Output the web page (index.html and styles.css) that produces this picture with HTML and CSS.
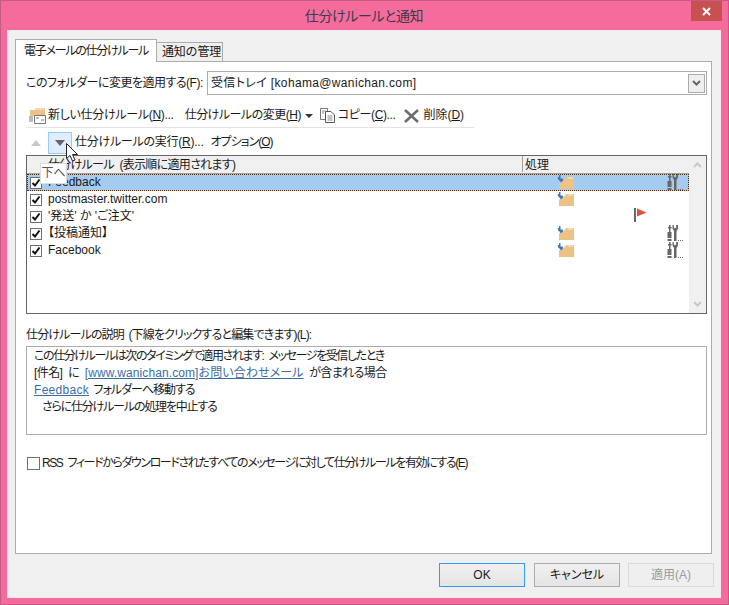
FILE: index.html
```html
<!DOCTYPE html>
<html lang="ja">
<head>
<meta charset="utf-8">
<title>仕分けルールと通知</title>
<link rel="stylesheet" href="styles.css">
</head>
<body>
<svg class="defs" width="0" height="0" aria-hidden="true">
  <symbol id="move" viewBox="0 0 18 15">
    <path d="M2 14V7.500L6 6 9 2H17V14Z" fill="#ecc384"/>
    <path d="M10.500 3H16" stroke="#fbeed8" fill="none"/>
    <path d="M2 0H3.500V3Q3.500 4 4.500 4V2.500L6.500 5 4 7.500 2.500 5.500Q1 5 0.800 3V2H2Z" fill="#3f77b5"/>
  </symbol>
  <symbol id="tools" viewBox="0 0 16 17">
    <path d="M2 0H3.500V2H4.500V3.500H3.500V7H4.500V13H0.500V7H2V3.500H1V2H2Z" fill="#666"/>
    <path d="M0.500 14H4.500V16H0.500Z" fill="#666"/>
    <path d="M5.500 0H6.800V2.500L8 3.500 9.200 2.500V0H11V3.500L9.500 6V16H7V6L5.500 3.500Z" fill="#666"/>
    <path d="M11 15.500H12M13 15.500H14M15 15.500H16" stroke="#666"/>
  </symbol>
  <symbol id="check" viewBox="0 0 12 12">
    <path d="M2.500 6L5 8.500 9.500 2.500" fill="none" stroke="#111" stroke-width="2"/>
  </symbol>
  <symbol id="chev" viewBox="0 0 9 6">
    <path d="M1 1L4.500 4.500 8 1" fill="none" stroke="currentColor" stroke-width="2"/>
  </symbol>
</svg>

<div class="window">
  <header class="titlebar">
    <span class="title">仕分けルールと通知</span>
    <button class="close" aria-label="閉じる">
      <svg width="9" height="9" viewBox="0 0 9 9"><path d="M1 1L8 8M8 1L1 8" stroke="#fff" stroke-width="2"/></svg>
    </button>
  </header>

  <main class="client">
    <nav class="tabs">
      <div class="tab active">電子メールの仕分けルール</div>
      <div class="tab">通知の管理</div>
    </nav>

    <section class="panel">
      <div class="folder-row">
        <label class="folder-label">このフォルダーに変更を適用する(F):</label>
        <div class="combo">
          <span class="combo-text">受信トレイ [kohama@wanichan.com]</span>
          <span class="combo-btn"><svg class="chev" width="9" height="6"><use href="#chev"/></svg></span>
        </div>
      </div>

      <div class="toolbar first">
        <span class="tool tool-new">
          <svg width="17" height="17" viewBox="0 0 17 17">
            <path d="M1 3H6L7 1H16V9H1Z" fill="#ecc384"/>
            <path d="M7 2H15" stroke="#fbeed8"/>
            <path d="M5.500 8.500H16.500V16.500H5.500Z" fill="#fff" stroke="#777"/>
            <path d="M7 11H10M12 13H15" stroke="#777"/>
            <path d="M0 10H4M0 12H4M0 14H4" stroke="#777"/>
          </svg>
          <span class="t-new">新しい仕分けルール(<u>N</u>)...</span>
        </span>
        <span class="tool tool-change"><span class="t-change">仕分けルールの変更(<u>H</u>)</span><i class="caret"></i></span>
        <span class="tool tool-copy">
          <svg width="15" height="15" viewBox="0 0 15 15">
            <path d="M0.500 0.500H7.500V11.500H0.500Z" fill="#fff" stroke="#777"/>
            <path d="M5.500 3.500H11L14.500 7V14.500H5.500Z" fill="#fff" stroke="#555"/>
            <path d="M2 3H6M2 5H4M7.500 8H12.500M7.500 10H12.500M7.500 12H12.500" stroke="#888"/>
          </svg>
          <span class="t-copy">コピー(<u>C</u>)...</span>
        </span>
        <span class="tool tool-del">
          <svg width="15" height="14" viewBox="0 0 15 14"><path d="M1 1L14 13M14 1L1 13" stroke="#6e6e6e" stroke-width="2.600"/></svg>
          <span>削除(<u>D</u>)</span>
        </span>
      </div>

      <div class="toolbar second">
        <span class="arrow-up"></span>
        <span class="arrow-btn"><i></i></span>
        <span class="tool tool-run">仕分けルールの実行(<u>R</u>)...</span>
        <span class="tool tool-opt">オプション(<u>O</u>)</span>
      </div>

      <div class="list">
        <div class="list-main">
          <div class="list-head">
            <span class="head-name">仕分けルール (表示順に適用されます)</span>
            <span class="head-act">処理</span>
          </div>
          <div class="row selected">
            <span class="cb"><svg width="12" height="12"><use href="#check"/></svg></span>
            <span class="name">Feedback</span>
            <svg class="ic-move" width="18" height="15"><use href="#move"/></svg>
            <span></span>
            <svg class="ic-tools" width="16" height="17"><use href="#tools"/></svg>
          </div>
          <div class="row">
            <span class="cb"><svg width="12" height="12"><use href="#check"/></svg></span>
            <span class="name">postmaster.twitter.com</span>
            <svg class="ic-move" width="18" height="15"><use href="#move"/></svg>
          </div>
          <div class="row">
            <span class="cb"><svg width="12" height="12"><use href="#check"/></svg></span>
            <span class="name">'発送' か 'ご注文'</span>
            <span></span>
            <svg class="ic-flag" width="13" height="15" viewBox="0 0 13 15">
              <path d="M0 0H2V14H0Z" fill="#666"/>
              <path d="M3 0.500L12.500 4.500 3 8.500Z" fill="#d9533a"/>
            </svg>
          </div>
          <div class="row">
            <span class="cb"><svg width="12" height="12"><use href="#check"/></svg></span>
            <span class="name">【投稿通知】</span>
            <svg class="ic-move" width="18" height="15"><use href="#move"/></svg>
            <span></span>
            <svg class="ic-tools" width="16" height="17"><use href="#tools"/></svg>
          </div>
          <div class="row">
            <span class="cb"><svg width="12" height="12"><use href="#check"/></svg></span>
            <span class="name">Facebook</span>
            <svg class="ic-move" width="18" height="15"><use href="#move"/></svg>
            <span></span>
            <svg class="ic-tools" width="16" height="17"><use href="#tools"/></svg>
          </div>
        </div>
        <div class="scrollbar">
          <svg class="chev" width="9" height="6"><use href="#chev" transform="rotate(180 4.500 3)"/></svg>
          <svg class="chev" width="9" height="6"><use href="#chev"/></svg>
        </div>
      </div>

      <div class="desc-label">仕分けルールの説明 (下線をクリックすると編集できます)(L):</div>
      <div class="desc">
        <p class="l1">この仕分けルールは次のタイミングで適用されます: メッセージを受信したとき</p>
        <p class="l2">[件名] に <a>[www.wanichan.com]お問い合わせメール</a> が含まれる場合</p>
        <p class="l3"><a>Feedback</a> フォルダーへ移動する</p>
        <p class="indent">さらに仕分けルールの処理を中止する</p>
      </div>

      <label class="rss"><span class="rss-box"></span><span class="rss-text">RSS フィードからダウンロードされたすべてのメッセージに対して仕分けルールを有効にする(E)</span></label>
    </section>

    <footer class="buttons">
      <button class="btn default">OK</button>
      <button class="btn">キャンセル</button>
      <button class="btn disabled">適用(A)</button>
    </footer>

    <div class="tooltip">下へ</div>
    <svg class="cursor" width="13" height="19" viewBox="0 0 13 19">
      <path d="M0.500 0.500V15.500L4 12.500 6.500 18 9 17 6.500 11.500H11.500Z" fill="#fff" stroke="#222"/>
    </svg>
  </main>
</div>
</body>
</html>
```

FILE: styles.css
```css
* { box-sizing: border-box; }
html, body { margin: 0; padding: 0; }
body {
  width: 729px;
  height: 605px;
  overflow: hidden;
  font-family: "Liberation Sans", "Noto Sans CJK JP", sans-serif;
  font-size: 12px;
  line-height: 17px;
  color: #1a1a1a;
  font-feature-settings: "palt";
}
.defs { position: absolute; }
.window {
  width: 729px;
  height: 605px;
  display: flex;
  flex-direction: column;
  background: #f56c9c;
  border: 1px solid #c45a85;
  padding: 0 7px 6px 6px;
}
.titlebar {
  height: 29px;
  flex: none;
  display: flex;
  justify-content: center;
  position: relative;
}
.title {
  font-size: 14px;
  line-height: 30px;
  color: #3a3a4a;
  letter-spacing: -0.4px;
}
.close {
  position: absolute;
  right: -1px;
  top: 0;
  width: 31px;
  height: 20px;
  border: 0;
  padding: 0;
  background: #c75050;
  display: flex;
  align-items: center;
  justify-content: center;
}
.client {
  flex: 1;
  position: relative;
  background: #f0f0f0;
  border: 1px solid #f7e7ee;
  padding: 8px 8px 0 7px;
  display: flex;
  flex-direction: column;
}
.tabs {
  display: flex;
  align-items: flex-end;
  height: 23px;
  position: relative;
  z-index: 1;
}
.tab {
  height: 20px;
  padding: 0 0 0 5px;
  width: 66px;
  border: 1px solid #acacac;
  border-left: 0;
  background: #efefef;
  line-height: 19px;
  font-feature-settings: normal;
  letter-spacing: -0.2px;
  white-space: nowrap;
}
.tab.active {
  height: 23px;
  width: 142px;
  padding: 0 0 0 8px;
  background: #fff;
  border-left: 1px solid #acacac;
  border-bottom: 0;
  line-height: 22px;
  font-feature-settings: "palt";
  letter-spacing: -1.25px;
}
.panel {
  height: 493px;
  background: #fff;
  border: 1px solid #acacac;
  padding: 9px 4px 0 10px;
  margin-top: -1px;
}
.folder-row {
  display: flex;
  align-items: center;
  height: 24px;
}
.folder-label {
  width: 181px;
  white-space: nowrap;
  letter-spacing: -0.5px;
}
.combo {
  flex: 1;
  height: 24px;
  border: 1px solid #acacac;
  display: flex;
  align-items: center;
  justify-content: space-between;
  padding: 0 1px 0 3px;
}
.combo-text { letter-spacing: 0.35px; }
.combo-btn {
  width: 17px;
  height: 19px;
  border: 1px solid #acacac;
  background: #efefef;
  color: #666;
  display: flex;
  align-items: center;
  justify-content: center;
}
.chev { display: block; }
.toolbar {
  display: flex;
  align-items: center;
  white-space: nowrap;
}
.toolbar.first {
  width: 448px;
  height: 24px;
  margin-top: 9px;
  border-bottom: 1px solid #e3e3e3;
  padding-left: 3px;
}
.toolbar.second {
  height: 25px;
  margin-top: 2px;
  padding-left: 5px;
}
.tool { display: inline-flex; align-items: center; }
.tool-new svg { margin-right: 2px; }
.t-new { letter-spacing: -0.3px; }
.t-change { letter-spacing: -0.5px; }
.t-copy { letter-spacing: -0.4px; }
.tool-change { margin-left: 11px; }
.caret {
  width: 0;
  height: 0;
  margin-left: 4px;
  border: 4px solid transparent;
  border-top: 4px solid #333;
  border-bottom: 0;
}
.tool-copy { margin-left: 7px; }
.tool-copy svg { margin-right: 3px; }
.tool-del { margin-left: 9px; }
.tool-del svg { margin-right: 4px; }
.arrow-up {
  width: 0;
  height: 0;
  border: 5px solid transparent;
  border-top: 0;
  border-bottom: 6px solid #c8c8c8;
}
.arrow-btn {
  width: 24px;
  height: 22px;
  margin-left: 7px;
  margin-right: 3px;
  background: #deeefc;
  border: 1px solid #9ccaf0;
  display: flex;
  align-items: center;
  justify-content: center;
}
.arrow-btn i {
  width: 0;
  height: 0;
  border: 5px solid transparent;
  border-bottom: 0;
  border-top: 6px solid #666;
}
.tool-run { margin-right: 7px; letter-spacing: -0.25px; }
.tool-opt { letter-spacing: -1px; }
.list {
  display: flex;
  height: 159px;
  border: 1px solid #666;
}
.list-main { flex: 1; min-width: 0; }
.list-head {
  height: 18px;
  background: #f0f0f0;
  border-bottom: 1px solid #a0a0a0;
  display: flex;
  line-height: 18px;
  white-space: nowrap;
}
.head-name { width: 495px; padding-left: 21px; letter-spacing: -0.7px; word-spacing: 3px; }
.head-act {
  padding-left: 2px;
  border-left: 1px solid #a0a0a0;
  height: 16px;
  font-feature-settings: normal;
}
.row {
  height: 17px;
  display: grid;
  grid-template-columns: 21px 510px 76px 33px 22px;
  align-items: center;
  white-space: nowrap;
}
.row.selected {
  background: #a5cbef;
  outline: 1px dotted #5a2a00;
  outline-offset: -1px;
}
.cb {
  width: 12px;
  height: 12px;
  margin-left: 3px;
  background: #fff;
  border: 1px solid #707070;
  display: block;
}
.cb svg { display: block; margin: -1px; }
.ic-move { margin-left: -1px; margin-top: -1px; }
.ic-flag { grid-column: 4; margin-top: -2px; }
.ic-tools { grid-column: 5; margin-top: -1px; }
.scrollbar {
  width: 17px;
  background: #f0f0f0;
  color: #c8c8c8;
  display: flex;
  flex-direction: column;
  justify-content: space-between;
  align-items: center;
  padding: 6px 0;
}
.desc-label {
  margin-top: 13px;
  height: 19px;
  letter-spacing: -0.85px;
  word-spacing: 2px;
}
.desc {
  height: 89px;
  border: 1px solid #acacac;
  padding: 1px 0 0 7px;
}
.desc p { margin: 0; height: 17px; white-space: nowrap; }
.desc .l1 { letter-spacing: -1.4px; word-spacing: 3px; }
.desc .l2 { letter-spacing: -0.6px; word-spacing: 3px; }
.desc .l3 { letter-spacing: -1px; word-spacing: 2px; }
.desc p.indent { padding-left: 8px; letter-spacing: -1.2px; }
.desc a {
  color: #3a6ea5;
  text-decoration: underline;
}
.desc .l2 a { letter-spacing: 0.1px; }
.desc .l3 a { letter-spacing: 0.3px; }
.rss {
  display: flex;
  align-items: center;
  margin-top: 20px;
  white-space: nowrap;
}
.rss-text { letter-spacing: -1.4px; word-spacing: 3px; }
.rss-box {
  width: 13px;
  height: 13px;
  margin: 0 2px 0 1px;
  background: #fff;
  border: 1px solid #707070;
}
.buttons {
  display: flex;
  justify-content: flex-end;
  gap: 8px;
  margin-top: 9px;
  margin-right: -2px;
}
.btn {
  width: 86px;
  height: 24px;
  padding: 0;
  font: inherit;
  font-feature-settings: "palt";
  color: #1a1a1a;
  background: linear-gradient(#f0f0f0, #e5e5e5);
  border: 1px solid #acacac;
}
.btn.default { border-color: #3399ff; margin-right: 1px; }
.btn.disabled {
  color: #9c9c9c;
  background: #efefef;
  border-color: #d9d9d9;
}
.tooltip {
  position: absolute;
  left: 32px;
  top: 132px;
  width: 27px;
  height: 21px;
  background: #fff;
  border: 1px solid #dcdcdc;
  text-align: center;
  line-height: 19px;
  font-size: 12px;
  color: #555;
  font-feature-settings: normal;
  z-index: 2;
}
.cursor {
  position: absolute;
  left: 58px;
  top: 112px;
  z-index: 3;
}
```
